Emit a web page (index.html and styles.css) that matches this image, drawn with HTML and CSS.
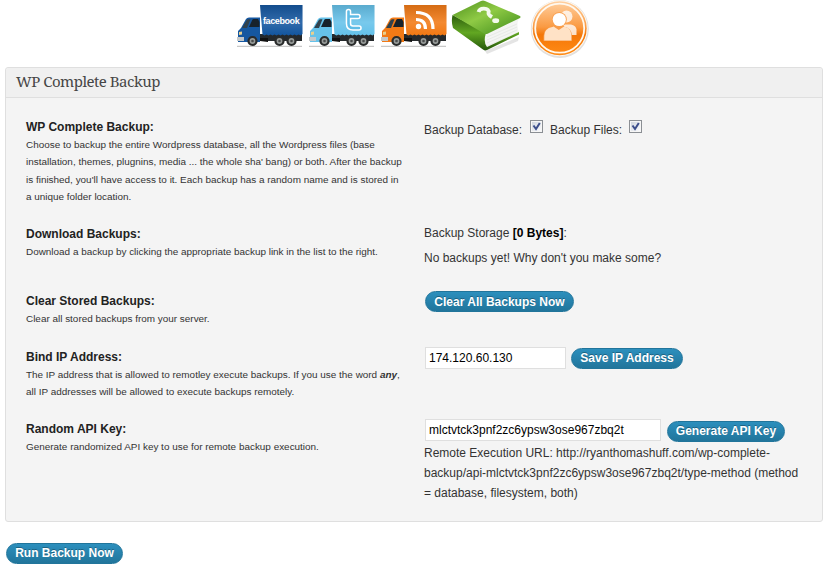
FILE: index.html
```html
<!DOCTYPE html>
<html lang="en">
<head>
<meta charset="utf-8">
<title>WP Complete Backup</title>
<link rel="stylesheet" href="styles.css">
</head>
<body>
<svg class="defs" aria-hidden="true">
  <defs>
    <linearGradient id="shade" x1="0" y1="0" x2="0" y2="1"><stop offset="0" stop-color="#000" stop-opacity=".12"/><stop offset=".6" stop-color="#fff" stop-opacity=".12"/><stop offset="1" stop-color="#fff" stop-opacity="0"/></linearGradient>
    <linearGradient id="cover" x1="0" y1="0" x2="1" y2="1"><stop offset="0" stop-color="#4d8f1b"/><stop offset=".45" stop-color="#8fca45"/><stop offset="1" stop-color="#3c8b19"/></linearGradient>
    <linearGradient id="spine" x1="0" y1="0" x2="0" y2="1"><stop offset="0" stop-color="#2c5c0c"/><stop offset=".5" stop-color="#62a722"/><stop offset="1" stop-color="#245709"/></linearGradient>
    <linearGradient id="orb" x1="0" y1="0" x2="0" y2="1"><stop offset="0" stop-color="#ffd0a0"/><stop offset=".48" stop-color="#fa9a42"/><stop offset=".62" stop-color="#f47708"/><stop offset="1" stop-color="#ff8b16"/></linearGradient>
    <g id="truck">
      <path d="M1 42.300H66" stroke="#bbb" stroke-width="1"/>
      <path d="M22 30h44v7H22z" fill="#25292c"/>
      <path d="M24 1h42.500v29l-2 1.500-2-1-2 1-2-1-2 1-2-1-2 1-2-1-2 1-2-1-2 1-2-1-2 1-2-1-2 1-2-1-2 1-2-1-2 1-2-1z" fill="currentColor"/>
      <path d="M24 1h42.500v29H24z" fill="url(#shade)"/>
      <path d="M2 38V27l3-3 5-9q1-1.500 3-1.500h11V38H2z" fill="currentColor"/>
      <path d="M6 24l4.500-7.500q.7-1.200 2-1.200h2L11 24z" fill="#31424d"/>
      <path d="M13 23l3.200-7q.5-1 1.500-1H22l1.500 3v5z" fill="#17222b"/>
      <path d="M1 33h7v4H1z" fill="#c4c8ca"/>
      <path d="M3 28l3-.5v3L3 31z" fill="#e8cf8e"/>
      <path d="M24 37l8 1v-4h-8z" fill="#111"/>
      <g fill="#969a98" stroke="#292b2b" stroke-width="2.200"><circle cx="16.500" cy="37" r="4"/><circle cx="43.500" cy="37" r="4"/><circle cx="55.500" cy="37" r="4"/></g>
      <g fill="#4a4c4c"><circle cx="16.500" cy="37" r="1.300"/><circle cx="43.500" cy="37" r="1.300"/><circle cx="55.500" cy="37" r="1.300"/></g>
    </g>
  </defs>
</svg>
<nav class="icons">
  <svg class="truck facebook" viewBox="0 0 68 46"><use href="#truck"/><text class="brand" x="27" y="20">facebook</text></svg>
  <svg class="truck twitter" viewBox="0 0 68 46"><use href="#truck"/><path d="M40.500 7.500v12q0 4.500 4.500 4.500h6M40.500 12.500H50" fill="none" stroke="#fff" stroke-width="5.600" stroke-linecap="round" stroke-linejoin="round"/><path d="M40.500 7.500v12q0 4.500 4.500 4.500h6M40.500 12.500H50" fill="none" stroke="#5fbce6" stroke-width="2.600" stroke-linecap="round" stroke-linejoin="round"/></svg>
  <svg class="truck feed" viewBox="0 0 68 46"><use href="#truck"/><circle cx="38.500" cy="22.500" r="2.700" fill="#fff"/><path d="M36 15.500q9.500 0 9.500 9.500M36 8.500q17 0 17 16.500" fill="none" stroke="#fff" stroke-width="3.200"/></svg>
  <svg class="book" viewBox="0 0 72 56">
    <path d="M34 51l34-14-1 4-31 13z" fill="#bbb" opacity=".4"/>
    <path d="M35 33L68 18q-3 7 0 14L35 48q-3-8 0-15z" fill="#f4f5f3"/>
    <path d="M36 37l30-13M36 40l30-13M36 43l30-13M36 46l30-13" stroke="#dfe2de" stroke-width=".6"/>
    <path d="M1.500 15q-1.500 7 .5 13l30 21.500q2 1.500 4 .5l32-15.500V32L36 47q-4-5-1-14z" fill="url(#spine)"/>
    <path d="M1.500 15L30 1q2-1 4 0l35 15q1 1 0 2L37 33.500q-2 1-4 0z" fill="url(#cover)"/>
    <path d="M27.500 12q1-3.500 5.500-3.300 5.500.3 4.500 4-.5 2 3.500 4.300" fill="none" stroke="#f4faee" stroke-width="3.800"/><ellipse cx="44.700" cy="20.700" rx="3.500" ry="2.400" fill="#f4faee"/>
  </svg>
  <svg class="people" viewBox="0 0 62 60">
    <circle cx="30.800" cy="29" r="29" fill="#e2e0de"/><circle cx="30.700" cy="28.200" r="28" fill="#fff8ee"/><circle cx="30.700" cy="28.200" r="27" fill="url(#orb)"/><circle cx="30.700" cy="28.200" r="24.500" fill="none" stroke="#fff8ee" stroke-width="1.800"/>
    <g fill="#fff" opacity=".78"><circle cx="37.500" cy="16.500" r="6"/><path d="M34 24.500h8q5 1 5.500 5V35H38z"/></g>
    <circle cx="30.300" cy="19.500" r="7.500" fill="#f9a253"/><path d="M14.500 41v-5q0-8 9-9.500h11q8.500 1.500 8.500 9.500v5z" fill="#f79b48"/>
    <circle cx="30.300" cy="19.500" r="6.600" fill="#fff"/><path d="M15.300 40.500v-5q0-7 8-8.500 2-1 2 0l4.500 3 4.500-3h2q6 1.500 6 8.500v5z" fill="#ffe2c6"/>
  </svg>
</nav>
<main class="panel">
  <h1 class="panel-title"><span>WP Complete Backup</span></h1>
  <div class="settings">
    <section class="label"><h2>WP Complete Backup:</h2><p>Choose to backup the entire Wordpress database, all the Wordpress files (base<br>installation, themes, plugnins, media ... the whole sha' bang) or both. After the backup<br>is finished, you'll have access to it. Each backup has a random name and is stored in<br>a unique folder location.</p></section>
    <div class="field checks"><label>Backup Database: <i class="check"><svg viewBox="0 0 11 11"><path d="M2.500 4.500l2.500 3.500L8.800 2"/></svg></i></label><label>Backup Files: <i class="check"><svg viewBox="0 0 11 11"><path d="M2.500 4.500l2.500 3.500L8.800 2"/></svg></i></label></div>
    <section class="label"><h2>Download Backups:</h2><p>Download a backup by clicking the appropriate backup link in the list to the right.</p></section>
    <div class="field storage"><p>Backup Storage <b>[0 Bytes]</b>:</p><p>No backups yet! Why don't you make some?</p></div>
    <section class="label"><h2>Clear Stored Backups:</h2><p>Clear all stored backups from your server.</p></section>
    <div class="field"><button class="button clear">Clear All Backups Now</button></div>
    <section class="label"><h2>Bind IP Address:</h2><p>The IP address that is allowed to remotley execute backups. If you use the word <b><em>any</em></b>,<br>all IP addresses will be allowed to execute backups remotely.</p></section>
    <div class="field line"><input class="ip" value="174.120.60.130"><button class="button save">Save IP Address</button></div>
    <section class="label"><h2>Random API Key:</h2><p>Generate randomized API key to use for remote backup execution.</p></section>
    <div class="field"><div class="line"><input class="key" value="mlctvtck3pnf2zc6ypsw3ose967zbq2t"><button class="button generate">Generate API Key</button></div><p class="url">Remote Execution URL: http://ryanthomashuff.com/wp-complete-<br>backup/api-mlctvtck3pnf2zc6ypsw3ose967zbq2t/type-method (method<br>= database, filesystem, both)</p></div>
  </div>
</main>
<button class="button run">Run Backup Now</button>
</body>
</html>
```
FILE: styles.css
```css
* { box-sizing: border-box; }
body { margin: 0; height: 569px; overflow: hidden; background: #fff; color: #333; font: 12px/20px "Liberation Sans", Arial, sans-serif; }
p, h1, h2 { margin: 0; }
.defs { display: block; width: 0; height: 0; }
.icons { display: flex; height: 67px; padding-left: 236px; }
.icons svg { display: block; flex: none; }
.truck { width: 68px; height: 46px; margin: 4px 4px 0 0; }
.facebook { color: #1557a0; }
.twitter { color: #66c2ea; }
.feed { color: #f27a16; }
.brand { fill: #fff; font: bold 9px "Liberation Sans", Arial, sans-serif; letter-spacing: -.4px; }
.book { width: 72px; height: 56px; margin-left: -1px; }
.people { width: 62px; height: 60px; margin-left: 6px; }
.panel { width: 818px; height: 455px; margin-left: 5px; border: 1px solid #dfdfdf; border-radius: 3px; background: #f4f4f4; }
.panel-title { height: 30px; padding-left: 10px; border-bottom: 1px solid #dfdfdf; background: #f0f0f0; border-radius: 3px 3px 0 0; color: #464646; font: 15px/27px "Noto Serif", "DejaVu Serif", Georgia, serif; letter-spacing: -.5px; }
.settings { display: grid; grid-template-columns: 399px 1fr; grid-template-rows: 107px 67px 56px 72px 100px; padding: 19px 0 0 20px; white-space: nowrap; }
.label h2 { height: 19px; font-size: 12px; line-height: 21px; color: #222; }
.label p { color: #333; font-size: 9.940px; line-height: 17.400px; }
.checks { display: flex; gap: 7px; margin-left: -1px; padding-top: 3px; }
.checks label { display: flex; }
.check { width: 13px; height: 13px; margin: 0 0 0 8px; border: 1px solid #8b8f94; background: linear-gradient(135deg, #cbd2dc, #fff); box-shadow: inset 0 0 0 1px #f6f6f6; }
.checks label + label .check { margin-left: 7px; }
.check svg { display: block; width: 11px; height: 11px; }
.check path { fill: none; stroke: #3d4f8c; stroke-width: 2; }
.storage { margin: -1px 0 0 -1px; }
.storage p { height: 25px; }
.storage b { color: #000; }
.button { display: block; height: 21px; padding: 0; border: 1px solid #21759b; border-radius: 11px; background: linear-gradient(#2c8fbd, #21759b); color: #fff; font: bold 12px/18px "Liberation Sans", Arial, sans-serif; text-shadow: 0 -1px 0 rgba(0,0,0,.3); white-space: nowrap; }
.clear { width: 149px; }
.save { width: 112px; margin: 1px 0 0 5px; padding-bottom: 2px; }
.generate { width: 118px; margin: 2px 0 0 6px; padding-bottom: 2px; }
.run { width: 117px; margin: 21px 0 0 6px; padding-bottom: 2px; }
.line { display: flex; }
input { height: 22px; padding: 0 3px; border: 1px solid #dfdfdf; border-radius: 0; background: #fff; color: #000; font: 12px "Liberation Sans", Arial, sans-serif; }
.ip { width: 141px; padding-bottom: 1px; }
.key { width: 236px; }
.url { margin: 1px 0 0 -1px; }
```
